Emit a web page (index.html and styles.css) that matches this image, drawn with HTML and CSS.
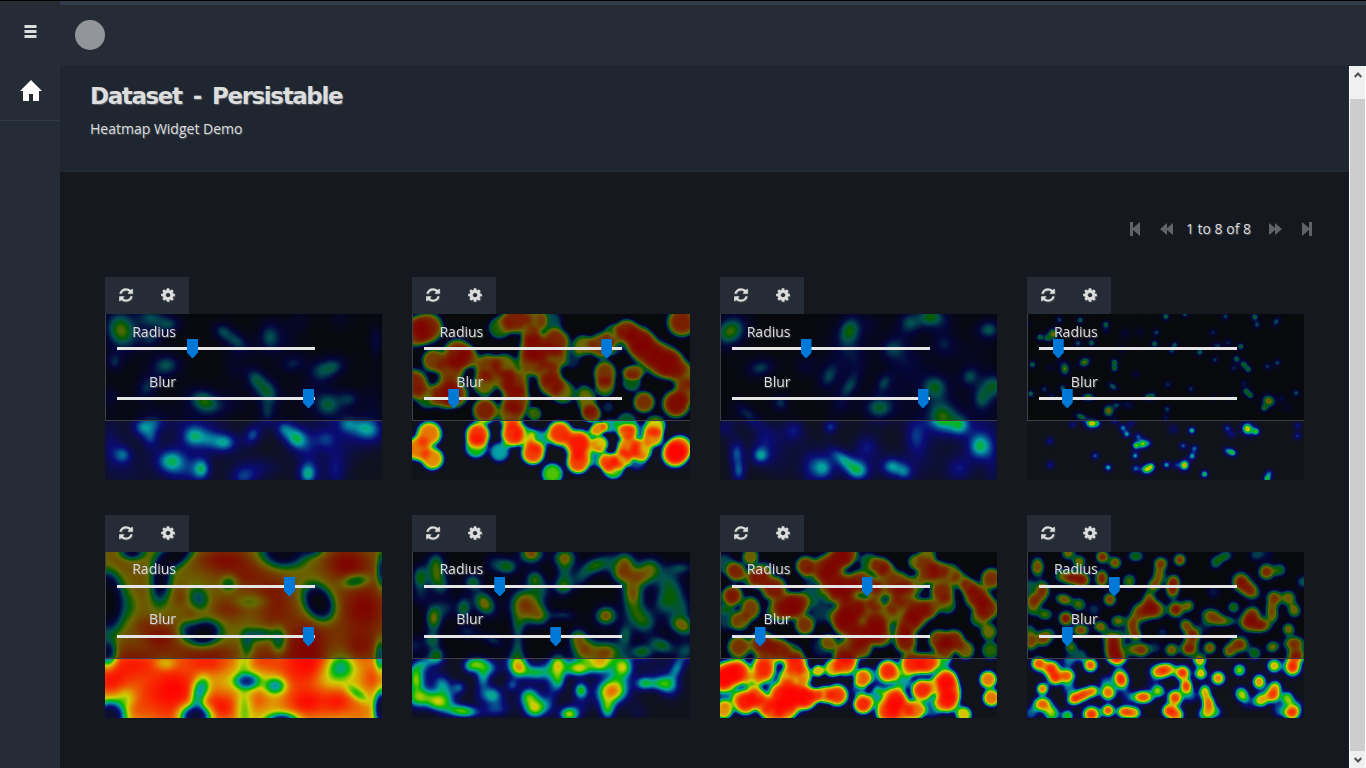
FILE: index.html
```html
<!DOCTYPE html>
<html lang="en">
<head>
<meta charset="utf-8">
<title>Dataset - Persistable</title>
<link rel="stylesheet" href="styles.css">
</head>
<body>
<svg class="defs" aria-hidden="true">
  <symbol id="refresh" viewBox="0 0 1536 1792"><path d="M1511 1056q0 5-1 7-64 268-268 434.5t-478 166.5q-146 0-282.5-55t-243.5-157l-129 129q-19 19-45 19t-45-19-19-45v-448q0-26 19-45t45-19h448q26 0 45 19t19 45-19 45l-137 137q71 66 161 102t187 36q134 0 250-65t186-179q11-17 53-117 8-23 30-23h192q13 0 22.5 9.5t9.5 22.5zm25-800v448q0 26-19 45t-45 19h-448q-26 0-45-19t-19-45 19-45l138-138q-148-137-349-137-134 0-250 65t-186 179q-11 17-53 117-8 23-30 23h-199q-13 0-22.5-9.5t-9.5-22.5v-7q65-268 270-434.5t480-166.5q146 0 284 55.5t245 156.5l130-129q19-19 45-19t45 19 19 45z"/></symbol>
  <symbol id="cog" viewBox="0 0 1536 1792"><path d="M1024 896q0-106-75-181t-181-75-181 75-75 181 75 181 181 75 181-75 75-181zm512-109v222q0 12-8 23t-20 13l-185 28q-19 54-39 91 35 50 107 138 10 12 10 25t-9 23q-27 37-99 108t-94 71q-12 0-26-9l-138-108q-44 23-91 38-16 136-29 186-7 28-36 28h-222q-14 0-24.5-8.5t-11.5-21.5l-28-184q-49-16-90-37l-141 107q-10 9-25 9-14 0-25-11-126-114-165-168-7-10-7-23 0-12 8-23 15-21 51-66.5t54-70.5q-27-50-41-99l-183-27q-13-2-21-12.5t-8-23.5v-222q0-12 8-23t19-13l186-28q14-46 39-92-40-57-107-138-10-12-10-24 0-10 9-23 26-36 98.5-107.5t94.5-71.5q13 0 26 10l138 107q44-23 91-38 16-136 29-186 7-28 36-28h222q14 0 24.5 8.5t11.5 21.5l28 184q49 16 90 37l142-107q9-9 24-9 13 0 25 10 129 119 165 170 7 8 7 22 0 12-8 23-15 21-51 66.5t-54 70.5q26 50 41 98l183 28q13 2 21 12.5t8 23.5z"/></symbol>
</svg>
<div class="app">
  <nav class="sidebar">
    <button class="side-toggle" aria-label="Menu"><svg width="13" height="13" viewBox="0 0 13 13"><path d="M.5 0h12v3H.5zM.5 5h12v3H.5zM.5 10h12v3H.5z"/></svg></button>
    <a class="side-home" aria-label="Home"><svg width="22" height="21" viewBox="0 0 22 21"><path d="M11 0 22 11h-3v10h-6v-7H9v7H3V11H0z"/></svg></a>
  </nav>
  <div class="main">
    <header class="topbar"><span class="avatar"></span></header>
    <div class="viewport">
      <div class="content">
        <section class="page-head">
          <h1>Dataset - Persistable</h1>
          <p>Heatmap Widget Demo</p>
        </section>
        <div class="pager">
          <svg class="p-first" width="10" height="14" viewBox="0 0 10 14"><path d="M0 0h3v6l7-6v14L3 8v6H0z"/></svg>
          <svg class="p-prev" width="14" height="12" viewBox="0 0 14 12"><path d="M0 6 7 0v5l6-5v12L7 7v5z"/></svg>
          <span>1 to 8 of 8</span>
          <svg class="p-next" width="14" height="12" viewBox="0 0 14 12"><path d="M14 6 7 0v5L1 0v12l6-5v5z"/></svg>
          <svg class="p-last" width="10" height="14" viewBox="0 0 10 14"><path d="M10 0H7v6L0 0v14l7-6v6h3z"/></svg>
        </div>
        <div class="grid" id="grid"></div>
      </div>
      <div class="scrollbar">
        <div class="sb-btn up"><svg width="8" height="6" viewBox="0 0 8 6"><path d="M.7 5 4 1.5 7.3 5"/></svg></div>
        <div class="sb-thumb"></div>
        <div class="sb-btn"><svg width="8" height="6" viewBox="0 0 8 6"><path d="M.7 1 4 4.5 7.3 1"/></svg></div>
      </div>
    </div>
  </div>
</div>
<script src="heatmaps.js"></script>
</body>
</html>
```
FILE: styles.css
```css
* { box-sizing: border-box; }
body { margin: 0; background: #15181f; color: #ddd; font: 14px/20px "Open Sans", "Noto Sans", sans-serif; text-shadow: 1px 1px 1px rgba(150, 150, 150, .5); overflow: hidden; }
.defs { display: none; }
.app { display: flex; height: 768px; border-top: 1px solid #000; }
.sidebar { width: 60px; background: #262c35; display: flex; flex-direction: column; }
.side-toggle { height: 60px; padding: 0; border: 0; background: none; fill: #ddd; display: flex; align-items: center; justify-content: center; }
.side-home { height: 60px; border-bottom: 1px solid #303947; fill: #fff; display: flex; align-items: center; justify-content: center; padding-left: 2px; }
.main { flex: 1; display: flex; flex-direction: column; min-width: 0; }
.topbar { height: 65px; border-top: 4px solid #323b4c; background: #262c35; border-bottom: 1px solid #232932; padding: 15px; }
.avatar { display: block; width: 30px; height: 30px; border-radius: 50%; background: #929599; }
.viewport { flex: 1; display: flex; min-height: 0; }
.content { flex: 1; min-width: 0; }
.page-head { height: 106px; background: #20262f; border-bottom: 1px solid #262c33; padding: 15px 30px; }
.page-head h1 { margin: 0; font: bold 23px/30px "DejaVu Sans", sans-serif; letter-spacing: -1.4px; word-spacing: 4.5px; white-space: nowrap; }
.page-head p { margin: 8px 0 0; }
.pager { display: flex; justify-content: flex-end; align-items: center; height: 20px; margin: 47px 37px 0 0; fill: #606468; white-space: nowrap; }
.p-first { margin-right: 20px; }
.p-prev { margin-right: 12px; }
.p-next { margin-left: 17px; margin-right: 20px; }
.grid { display: grid; grid-template-columns: repeat(4, 1fr); column-gap: 30px; row-gap: 35px; padding: 38px 45px 0; }
.tools { width: 84px; height: 37px; background: #262c35; display: flex; align-items: center; justify-content: space-around; padding: 0 0 1px; fill: #ddd; }
.tools svg { width: 14px; height: 16px; filter: drop-shadow(1px 1px 0 rgba(130, 130, 130, .3)); }
.heat { display: grid; height: 166px; background: #111419; }
.heat > * { grid-area: 1 / 1; }
.heat canvas { width: 100%; height: 166px; display: block; }
.controls { height: 107px; background: rgba(0, 0, 0, .5); border-left: 1px solid #3f4043; border-bottom: 1px solid #3f4043; padding: 8px 0 0 11px; z-index: 1; }
.field { height: 50px; width: 198px; }
.field label { display: block; width: 59px; height: 17px; line-height: 20px; text-align: right; }
.row2 .field label { line-height: 18px; }
.slider { height: 19px; display: flex; align-items: center; background: linear-gradient(#e6e6e6, #e6e6e6) 0 8px / 100% 3px no-repeat; }
.thumb { width: 11px; height: 19px; background: #0078d7; clip-path: polygon(0 0, 100% 0, 100% 73%, 55% 100%, 45% 100%, 0 73%); }
.scrollbar { width: 17px; background: #f0f0f0; border-left: 1px solid #fff; border-right: 1px solid #fff; display: flex; flex-direction: column; }
.sb-btn { height: 17px; display: flex; align-items: center; justify-content: center; }
.sb-btn.up { height: 33px; align-items: flex-start; padding-top: 6px; }
.sb-btn svg { fill: none; stroke: #505050; stroke-width: 2; }
.sb-thumb { flex: 1; background: #cdcdcd; }
```
FILE: heatmaps.js
```js
// Each spot is [x, y, strength, rx, ry, rotation], in thirds of a pixel,
// measured from an origin at (15, 132). Negative strength thins the field.
const maps = [
  { radius: 82, blur: 198, p: 1.9, grow: 1.6, size: 20, base: .05, spots: [
    [62,180,.77,28,36,-20],[150,142,.52,26,18],[205,162,.5,22,15],[150,205,.44,20,15],[365,182,.44,16,14,40],[408,212,.52,28,16,35],[507,200,.55,20,27],[42,275,.44,14,16],[198,284,.58,26,20],[140,350,.49,18,26,30],[465,325,.52,16,22,-30],[502,362,.58,20,26,-40],[500,425,.45,15,22],[312,393,.69,30,21,25],[577,280,.42,22,14,-20],[695,290,.56,26,18,-20],[655,303,.35],[682,403,.6,24,24],[745,385,.46,20,16],
    [125,470,.46,20,18],[150,505,.34,14,20],[165,450,.32],[280,498,.54,22,20],[372,516,.56,24,19],[325,505,.3],[457,493,.46,15,20,30],[550,475,.4,16,16],[588,505,.62,20,24,-40],[740,460,.36,18,16],[798,476,.53,30,22,20],[68,553,.43,16,16],[212,572,.61,28,24],[303,595,.57,16,20],[428,620,.4,25,20],[622,610,.57,17,21],[675,505,.35],[705,600,.36,20,35],[825,210,.38,10,30],
    [30,520,.3,20,45],[250,450,.22,45,30],[480,590,.26,40,20],[630,540,.2,20,45],[740,520,.2,35,35],[400,290,.25,20,30],[720,145,.25],[820,400,.25,20,45],[260,610,.25,30],[600,150,.22],[560,210,.22,25,30],[25,380,.3],[620,370,.22,30,30],[390,400,.25,30,20],[90,610,.18,35]]},
  { radius: 189, blur: 36, p: 5.5, grow: 1.11, size: 38, spots: [
    [60,172,.95,44],[20,185,.9,42],[18,340,.95,42],[78,270,.9,33],[150,250,.95,42],[130,300,.9],[115,370,.95,42],[145,372,.85,36],[60,380,.7,34],[180,260,.8,30],[240,290,.9,38],[290,285,.82,34],[230,340,.83,34],[232,420,.95,36],[275,172,.73,32],[325,145,.95,42],[385,150,.8,30],[370,195,.8,26],[380,230,.96,42],[370,275,.88,40],[445,215,.94,38],[435,265,.85,36],[420,310,.75,34],[290,330,.75,28],[320,340,.92,40],[325,390,.9,40],[310,430,.85],[430,340,.9,36],[465,365,.8,34],[425,155,.58,36],[490,265,.5,28],[525,225,.8,30],[580,225,.91,36],[615,190,.7,28],[590,310,.91,32,38],[590,350,.76,28],[655,180,.93,32],[690,210,.96,42],[715,240,.93,44],[760,270,.96,48],[792,285,.9,40],[820,155,.95,42],[835,320,.8,40],[838,360,.75,34],[675,305,.88,32,20],[670,335,.68,28],[707,395,.92,31],[803,400,.98,40],[535,390,.8,28,45,-15],[550,430,.91,28,24],[600,410,.5,16],[380,430,.75,20],[620,230,.5,24],
    [65,490,.9,36],[75,565,.88,32],[30,535,.9,34],[210,492,.96,34],[205,530,.7,32],[275,545,.6,29],[315,490,.96,33,37],[350,495,.6,29],[375,548,.95,33],[390,510,.6,32],[455,488,.96,36],[512,520,.98,40],[510,575,.95,33],[570,475,.88,26,18,-25],[575,520,.82,24],[565,560,.55,28],[605,465,.6,22],[433,610,.74,31],[600,575,.87,26],[615,595,.74,30],[655,485,.87,28,20],[655,455,.66,30],[660,530,.9,32],[640,565,.8,27],[700,540,.83,30],[685,570,.5,28],[735,500,.87,28],[740,465,.8,30],[690,490,.5,28],[800,550,.99,38],[815,530,.85,34]]},
  { radius: 81, blur: 198, p: 1.9, grow: 1.56, size: 20, base: .05, spots: [
    [45,182,.75,32,26,-40],[402,180,.65,20,28,20],[583,158,.5,20],[645,140,.68,25,20],[820,177,.59,22,18],[135,292,.53,26,17,-15],[340,318,.51,16,26,25],[400,350,.5,14,26,35],[505,337,.47,12,18,30],[527,235,.45],[195,397,.5,15],[95,430,.46,14,28,-50],[490,412,.63,28,22],[658,350,.64,26,24],[762,318,.51,16,18,40],[832,347,.62,24,24],[798,385,.46,15,20],[680,438,.71,28,30,-30],[732,464,.5,18],[793,527,.61,22,25],[63,545,.44,14,22],[70,603,.46,13,22],[135,555,.53,16],[345,470,.43,13],[322,592,.56,22,24,-20],[385,568,.52,32,14,40],[428,600,.53,23,20],[528,588,.54,20,18],[567,605,.42,16],[455,530,.38,25],[600,495,.36,20,35],[730,595,.38,25],[685,220,.38],[150,500,.3,25],[235,480,.36],[590,280,.28,30,30],[420,270,.28,25,35],[270,285,.3],[380,240,.2,45],[470,160,.22],[690,160,.2],[620,560,.2,30,50],[800,440,.22,45],[190,560,.2,30,40],[550,360,.22,30,40],[280,590,.25,20,40],[30,470,.3],[830,590,.25,15,50],[375,410,.3],[750,250,.2,50,30],[555,220,.22,20,40]]},
  { radius: 26, blur: 35, p: 1.9, grow: 1.4, size: 8, spots: [
    [111,148,.57],[173,149,.67],[250,162,.67],[430,138,.7],[487,131,.6],[609,138,.58],[697,139,.69],[704,163,.58],[761,154,.6,8,11,35],[52,200,.69],[75,204,.58],[92,190,.84,11,12],[166,218,.62],[207,217,.7],[402,186,.58],[307,190,.35,12],[353,184,.33,11],[252,182,.35],[572,186,.5],[618,216,.5],[396,220,.69],[457,223,.6],[447,241,.55],[532,245,.69],[585,226,.56,12,8,20],[655,228,.71],[297,236,.35,11],[577,268,.55],[642,265,.69],[664,282,.7],[678,297,.67],[634,293,.5],[735,288,.54],[765,277,.58],[30,282,.69],[82,292,.4],[127,295,.8,10,14],[186,275,.8,13,10,-25],[276,275,.68],[276,294,.68],[340,310,.42],[436,342,.52],[505,355,.54],[664,338,.44],[671,362,.67],[684,375,.67],[739,391,.88,14,12,30],[725,413,.68],[778,383,.4],[797,412,.3,11],[821,368,.6],[25,370,.68],[65,356,.55],[88,376,.48],[120,353,.66],[197,380,.8,13,9],[271,348,.64,12,8,35],[376,380,.7],[392,376,.58],[258,421,.89,11,12],[283,404,.55],[310,402,.38],[325,406,.35],[434,416,.57],[175,438,.7,13,8,20],[429,442,.45],[108,272,.3],[573,380,.3],[625,380,.3],[15,162,.4],
    [150,462,.42],[207,459,.84,12,10],[225,459,.45],[277,451,.45],[327,459,.4],[301,472,.55],[313,491,.6],[347,497,.48],[508,480,.67],[453,477,.36,11],[614,473,.47],[628,492,.38,10],[675,475,.85,12,13,-20],[701,483,.69],[825,465,.43],[825,496,.47],[82,512,.43,9],[83,583,.43,9],[340,525,.71],[361,520,.74,10],[379,518,.4],[482,526,.52],[516,534,.54],[509,557,.61],[338,556,.6],[339,594,.52],[218,556,.52],[257,591,.64],[372,597,.79,12,10],[386,588,.68],[432,583,.61],[461,584,.4],[486,584,.87,10,11],[629,546,.71,10,8,25],[612,540,.4],[546,611,.71],[734,624,.71],[741,608,.48]]},
  { radius: 179, blur: 198, p: 2.2, grow: 1, thin: .8, size: 40, base: .82, spots: [
    [50,170,.35,35,50],[120,230,.2,30,70],[370,155,.85,80,38],[440,200,.7,75,45],[520,250,.65,50],[385,300,.65,50,35],[530,310,.65,55],[740,165,.95,70,50],[790,300,.95,75,80],[620,410,.95,55,70],[670,360,.45,50],[180,385,.85,55,45],[60,420,.35,50],[130,350,.4,25],[320,430,.6,100,25],[240,265,.45,22,28],[275,325,.35,28],[560,430,.5,70],[780,410,.8,50],[630,470,.8,50,38],
    [30,515,.85,50],[110,470,.8,70,45],[220,540,.97,80,70],[320,465,.8,70,33],[210,600,.6,70],[360,595,.9,60,45],[475,575,.5,30,32],[490,455,.6,50,30],[620,580,.93,68,48],[710,580,.85,48,38],[815,510,.65,32,38],[590,500,.6,55],[60,500,.4,50],[100,600,.5,45,35],[780,610,.4,40],[150,550,.4,40],
    [22,285,-.97,45,80],[15,225,-.35,35],[95,130,-.6,35,22],[225,140,-.88,58,30,-35],[182,210,-.72,28,68,5],[550,130,-.85,62,42],[630,125,-.4,38,20],[655,282,-.93,38,52,-30],[310,373,-.9,46,34,-10],[262,365,-.3,28],[295,270,-.3,28,35,-25],[385,225,-.25,25],[450,280,-.12,50,20],[480,378,-.3,50,22],[440,405,-.25,20,40],[535,395,-.3,22,38],[765,218,-.28,42,20,-10],[22,430,-.55,26,40],[843,185,-.45,15,50],[85,290,-.1,30,40],[302,540,-.34,25,36,15],[290,580,-.22,20,35],[440,518,-.46,38,24],[525,532,-.33,32,26],[285,625,-.8,42,34],[722,475,-.24,38,35],[690,500,-.08,40],[770,555,-.18,42,18,35],[75,570,-.12,30],[30,622,-.82,42,42,-30],[545,640,-.66,45,25],[843,600,-.82,20,48],[838,440,-.35,15,45],[430,600,-.14,25,60],[195,465,-.1,30,20],[430,470,-.1,25,40]]},
  { radius: 82, blur: 138, p: 2.2, grow: 1.34, size: 22, base: .04, spots: [
    [38,207,.68,18,28],[85,165,.65,20,26],[88,205,.6,18,24],[105,235,.45],[370,135,.88,26,22],[300,175,.65,22,18],[260,165,.44],[470,148,.79,24,20],[470,190,.52,18,30],[465,235,.65,20,20],[380,210,.66,19,18],[400,245,.47],[195,220,.64,20,18],[560,172,.66,26,18,-20],[520,205,.5,18,26,35],[650,165,.8,22,26],[640,195,.72,22,20],[690,205,.75,28,20],[725,180,.73,26,26],[673,255,.85,24,36],[820,178,.5,28,14],[780,215,.48,28],[790,260,.56,32,28],[600,160,.4],[230,285,.82,22,30,-35],[350,285,.82,32,34],[360,305,.55,28],[395,320,.66,20,24,-30],[465,320,.48,30,12],[593,322,.86,24,22],[78,330,.78,18,30],[168,300,.65,16,26],[115,300,.44],[75,395,.58,18],[88,440,.63,18],[40,265,.35],[180,370,.44,25,15],[255,395,.48,25,14,20],[330,350,.5,14,28],[330,420,.52,15,35],[707,340,.66,30,28,25],[680,310,.4],[765,290,.42],[820,350,.83,30,22,25],[760,410,.66,30,18,20],[700,430,.65,24,16],[650,380,.57,16,25],[510,390,.78,20,22],[530,425,.82,26,24],[590,433,.87,38,26,-10],[835,425,.52],[820,300,.45],[20,410,.42],
    [208,465,.66,24,18],[245,480,.46,22,18],[225,510,.5,15,22],[185,475,.4,14],[333,477,.8,22,22],[310,450,.3],[380,492,.54,24,15],[450,465,.71,18,24],[420,485,.38],[452,515,.57,14,24],[490,475,.36,22,18],[515,481,.7,26,16],[575,470,.64,24,18],[645,475,.71,20,22],[625,500,.28],[25,515,.69,17,26],[40,470,.4,28,13,-30],[105,525,.42,18,18],[155,537,.46,15],[45,565,.6,34,20],[88,582,.6,22,18],[115,560,.4],[28,575,.36],[165,608,.72,36,15,5],[118,590,.25],[258,560,.53,20,20],[225,560,.33,20],[312,530,.43,14],[362,565,.63,20,20],[380,600,.73,24,22],[412,590,.3,18],[430,545,.22,12,38],[518,545,.67,15,18],[483,617,.76,22,17],[612,547,.89,36,29,-10],[598,600,.64,16,26],[707,525,.57,18,15],[740,525,.28,20,12],[768,525,.55,24,18],[788,543,.34],[805,480,.45,13,24,25],[60,490,.3,35],[290,590,.2],[260,605,.35,25,15],[520,590,.25],[690,610,.2],[750,480,.22,60,30],[400,540,.18,40]]},
  { radius: 142, blur: 35, p: 4.6, grow: 1.13, size: 34, spots: [
    [25,165,.58,30],[105,145,.83,24,24],[62,190,.94,27],[52,260,.95,28],[105,300,.9,28,34],[75,338,.83,26],[35,330,.55,35],[30,280,.45,30],[130,205,.95,32],[175,240,.96,36],[100,215,.5,22],[150,180,.5,22],[215,295,.96,38],[245,290,.95,34],[180,310,.7,28],[268,350,.92,28],[285,260,.6,28],[285,205,.5,24],[320,310,.53,32],[270,172,.94,28],[330,180,.96,38],[370,150,.95,34],[395,135,.9,32],[350,215,.9,38],[390,235,.93,34],[435,220,.94,34],[340,250,.65,28],[380,330,.93,34],[410,300,.96,38],[400,350,.93,38],[375,260,.85,30],[495,175,.9,28],[460,160,.68,26],[515,190,.75,26],[470,235,.83,28],[500,240,.8,28],[480,285,.75,22],[515,320,.82,32],[455,300,.82,32],[470,365,.95,36],[495,380,.9,34],[430,385,.9,32],[480,340,.8,25],[550,225,.9,34],[560,260,.87,34],[540,290,.75,26],[605,310,.97,40],[580,345,.92,34],[570,400,.96,32],[560,370,.75,22],[600,160,.8,22],[640,190,.94,34],[670,185,.8,26],[635,140,.8,25],[705,195,.82,28],[680,250,.94,34],[645,300,.85,26],[735,215,.72,24],[695,290,.72,26],[600,230,.75,26],[785,265,.97,36],[815,300,.95,34],[760,235,.85,24],[828,210,.92,30],[790,330,.72,26],[820,370,.8,24],[825,425,.74,26],[670,395,.93,30],[715,395,.95,30],[750,425,.84,26],[690,420,.8,26],[340,400,.75,22],[320,415,.5,32],[390,430,.9,34],[440,420,.9,28],[70,415,.92,32],[140,405,.96,36],[190,425,.95,34],[235,430,.6,25],
    [35,500,.98,40],[70,490,.96,34],[145,480,.97,34,42],[15,515,.9,28],[112,520,.7,24],[240,465,.97,33],[265,500,.82,24],[215,505,.8,24],[90,580,.98,36],[125,565,.9,26],[145,590,.7,24],[25,605,.87,26],[200,560,.97,40],[245,560,.98,44],[275,570,.9,28],[170,605,.92,34],[210,605,.9,32],[308,487,.83,17],[350,480,.83,24],[390,465,.94,34],[365,560,.96,31],[325,558,.85,24],[300,560,.7,18],[440,510,.82,24],[455,500,.6,24],[518,487,.97,31],[443,587,.97,28],[485,565,.55,26],[540,570,.97,32],[515,610,.95,32],[555,605,.92,34],[600,605,.9,28],[590,465,.97,34],[635,465,.96,31],[620,545,.97,31],[560,515,.6,26],[500,530,.4,26],[660,530,.65,24],[692,515,.98,32],[695,575,.98,35],[705,545,.8,30],[680,450,.65,28],[818,513,.9,25],[828,568,.9,25],[745,618,.82,23],[35,560,.5,28],[430,540,.5,22],[650,600,.5,26]]},
  { radius: 82, blur: 35, p: 3, grow: 1.17, size: 18, spots: [
    [45,175,.88,18,26],[137,133,.83,18,18],[170,160,.82,18],[150,208,.96,28,20],[180,215,.94,20],[115,200,.65,18],[20,230,.6],[60,245,.92,20,26],[35,275,.92,24,22],[30,305,.65],[68,318,.76,20,16],[240,145,.94,18],[278,163,.88,17],[238,210,.95,18,24],[320,218,.76,18,20,20],[340,143,.7,22,16],[415,165,.9,19,18],[410,200,.84,17,22],[395,230,.86,18],[453,220,.92,18,20],[450,245,.92,18,22],[472,154,.91,17],[580,162,.66,17,18],[608,143,.67,20,15,-20],[700,138,.55],[732,190,.94,22,22],[772,184,.68],[735,135,.4],[842,220,.6],[125,273,.86,24,16,15],[170,288,.76,18],[262,273,.9,18],[215,303,.52],[380,270,.8,16,22],[385,300,.95,26,24],[355,312,.9,26],[330,350,.91,18,26],[340,380,.85,16],[405,305,.75,22],[460,303,.97,22],[497,292,.8,17],[573,250,.45],[633,296,.72,16],[570,325,.9,30,22,20],[610,338,.7,25,14],[655,220,.96,24,26],[682,245,.94,28,22,40],[755,270,.92,21,22],[798,268,.83,20],[750,320,.82,17,20],[815,305,.82,18,20,-20],[745,298,.6,15],[680,340,.97,28,26],[715,350,.95,28,20],[690,315,.84,20],[798,362,.83,17],[130,330,.97,20],[175,365,.9,22,17],[233,353,.83,18,15],[287,337,.8,20,16],[62,390,.9,22],[25,400,.88,18,24],[20,365,.6],[85,375,.5],[145,415,.76,17],[272,400,.95,24,28],[275,430,.95,24],[285,450,.93,24,18],[325,422,.7],[357,424,.92,22,20],[398,418,.5],[420,372,.5,14],[447,424,.86,18],[490,350,.86,17],[510,380,.96,22,24],[500,420,.96,24,22],[562,418,.88,17],[650,408,.94,26,22],[620,428,.85,18],[697,434,.7],[750,415,.8,18,16,-20],[815,405,.92,28,20],[822,440,.95,24,20],[250,375,.4],[545,355,.4],[300,380,.45],[175,440,.6],
    [48,465,.93,20],[85,480,.96,24,22],[98,508,.94,20],[133,502,.92,22,20],[140,540,.52],[140,455,.55],[204,470,.93,19],[60,541,.89,16],[60,587,.92,25,20],[88,615,.75,20],[25,615,.5],[158,570,.95,22,17,-25],[185,557,.91,20,17,-25],[211,548,.83,16],[250,520,.5],[257,553,.91,21,20],[295,512,.97,21,28,-15],[257,606,.93,17],[207,617,.96,24,22],[305,610,.91,20,17],[333,613,.86,20,17],[315,565,.4],[362,566,.94,28,18],[409,548,.73,16],[410,490,.9,25,20],[435,482,.85,22,17],[480,493,.96,21,20],[491,533,.95,17,20],[505,562,.5],[458,568,.95,21,22],[440,607,.94,20,19],[462,620,.87,20],[532,455,.85,18],[535,495,.83,17],[587,509,.89,19],[547,550,.82,16,20],[558,583,.89,17,20],[570,610,.7,24,18],[545,618,.6],[651,485,.76,17],[658,558,.78,18,21,-30],[710,520,.87,18,20],[755,472,.83,19],[810,475,.97,23,25],[750,560,.94,22,20],[758,535,.78,17],[715,575,.82,19],[795,570,.75,17,19],[808,613,.95,22,20],[770,605,.5],[680,585,.35],[135,622,.7,17],[820,592,.5],[390,530,.35]]}
];

// Colour stops of the heat ramp: position, red, green, blue.
const ramp = [[0,0,0,70],[.4,0,0,255],[.6,0,255,255],[.7,0,255,0],[.8,255,255,0],[1,255,0,0]];
function colour(t) {
  let i = 1;
  while (i < ramp.length - 1 && t > ramp[i][0]) i++;
  const a = ramp[i - 1], b = ramp[i], k = (t - a[0]) / (b[0] - a[0]);
  return [1, 2, 3].map(c => a[c] + (b[c] - a[c]) * k);
}
const lut = Array.from({ length: 1001 }, (_, i) => colour(i / 1000));

function paint(canvas, map) {
  const w = canvas.width, h = canvas.height, ctx = canvas.getContext('2d');
  const clear = new Float32Array(w * h).fill(1 - (map.base || 0));
  for (const [sx, sy, v, rx = map.size, ry = rx, rot = 0] of map.spots) {
    const cx = (sx - 15) / 3, cy = (sy - 132) / 3, a = rot * Math.PI / 180;
    const grow = map.grow * (v < 0 ? map.thin : 1);
    const ax = rx * grow / 3, ay = ry * grow / 3, reach = Math.max(ax, ay) * 3;
    const c = Math.cos(a), s = Math.sin(a);
    for (let y = Math.max(0, Math.floor(cy - reach)); y < Math.min(h, cy + reach); y++)
      for (let x = Math.max(0, Math.floor(cx - reach)); x < Math.min(w, cx + reach); x++) {
        const dx = x - cx, dy = y - cy;
        const d = Math.hypot((dx * c + dy * s) / ax, (dy * c - dx * s) / ay);
        const k = Math.pow(2, -Math.pow(d, map.p)), i = y * w + x;
        clear[i] = v > 0 ? clear[i] * (1 - v * k) : 1 - (1 - clear[i]) * (1 + v * k);
      }
  }
  const img = ctx.createImageData(w, h);
  for (let i = 0; i < w * h; i++) {
    const t = Math.min(1, Math.max(0, 1 - clear[i]));
    img.data.set([...lut[Math.round(t * 1000)], t * 255], i * 4);
  }
  ctx.putImageData(img, 0, 0);
}

const grid = document.getElementById('grid');
maps.forEach((map, n) => {
  const card = document.createElement('article');
  if (n > 3) card.className = 'row2';
  const field = (name, left) => `<div class="field"><label>${name}</label><div class="slider"><div class="thumb" style="margin-left:${left - 12}px"></div></div></div>`;
  card.innerHTML = `<div class="tools"><svg><use href="#refresh"/></svg><svg><use href="#cog"/></svg></div>
    <div class="heat"><canvas width="277" height="166"></canvas><div class="controls">${field('Radius', map.radius)}${field('Blur', map.blur)}</div></div>`;
  grid.append(card);
  paint(card.querySelector('canvas'), map);
});
```
